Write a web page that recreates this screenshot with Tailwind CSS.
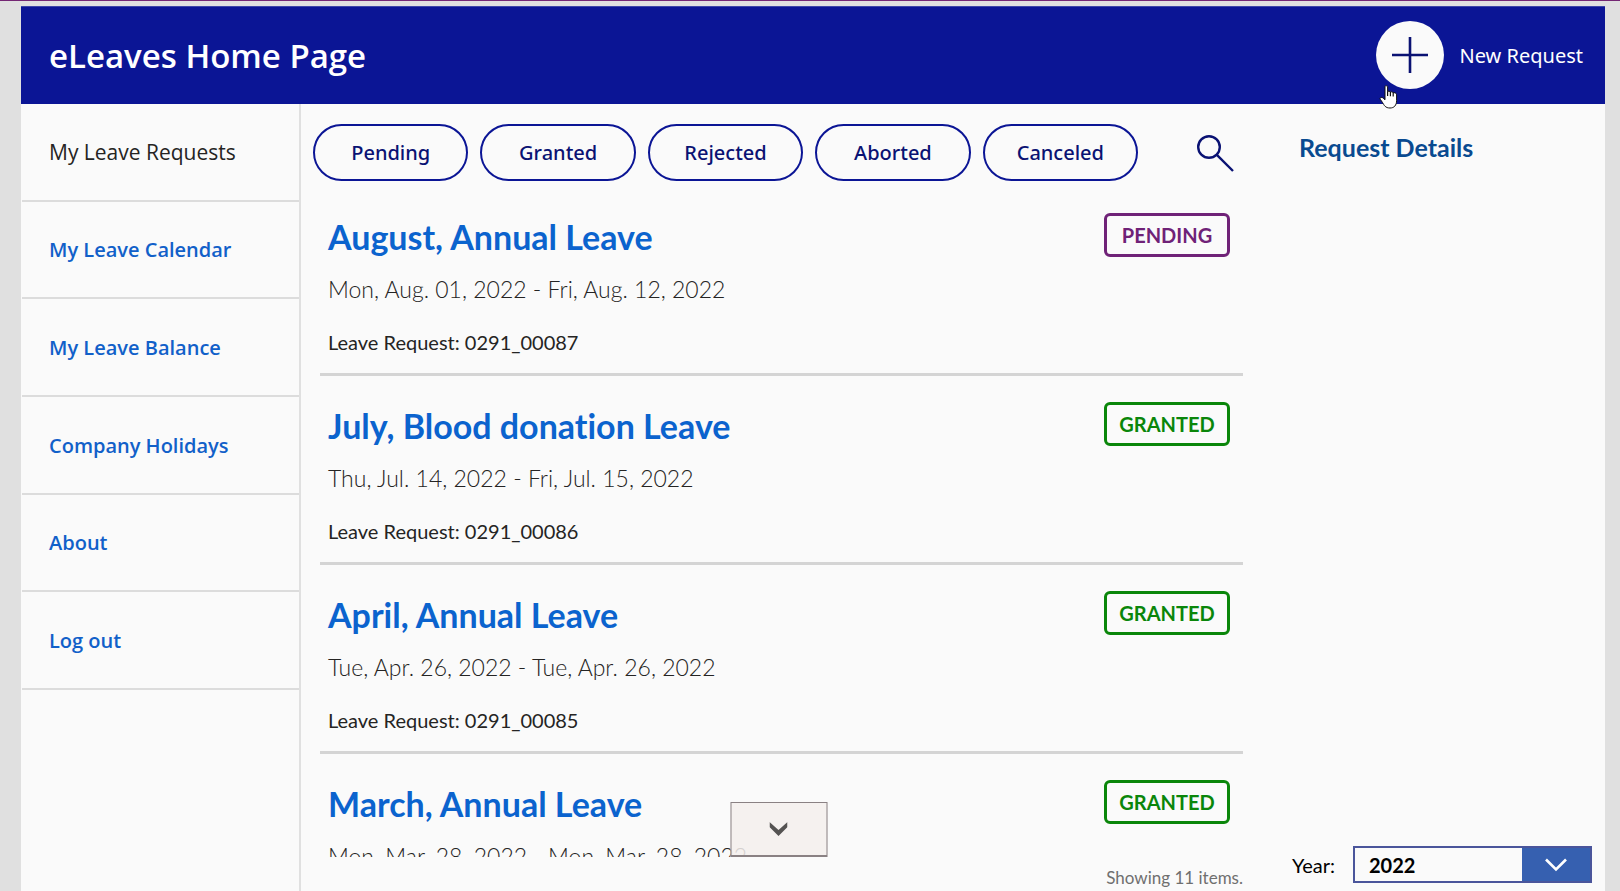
<!DOCTYPE html>
<html lang="en">
<head>
  <meta charset="UTF-8">
  <meta name="viewport" content="width=device-width, initial-scale=1.0">
  <title>eLeaves Home Page</title>
  <script src="https://cdn.jsdelivr.net/npm/@tailwindcss/browser@4"></script>
</head>
<body class="h-screen overflow-hidden bg-[#e0e0e0] border-t border-[#742774] pt-[5px] pl-[21px] pr-[15px] font-['Lato',sans-serif] text-[#252423]">

  <div class="h-full flex flex-col bg-[#fafafa]">

    <header class="relative h-[98px] shrink-0 flex items-center justify-between bg-[#0b1595] border-t border-[#3d45a8] pl-7 pr-[22px] pb-0.5 font-['Open_Sans',sans-serif]">
      <h1 class="pt-0.5 text-[33px] font-semibold text-white">eLeaves Home Page</h1>
      <button class="flex items-center gap-4 text-xl text-white cursor-pointer">
        <svg class="w-[68px] h-[68px]" viewBox="0 0 68 68" fill="none">
          <circle cx="34" cy="34" r="34" fill="#fafafa"/>
          <path d="M16 34H52M34 16V52" stroke="#0a1273" stroke-width="2.6"/>
        </svg>
        <span class="pt-0.5 font-['Noto_Sans',sans-serif]">New Request</span>
      </button>
      <!-- pointer -->
      <svg class="absolute right-[207px] top-[78px] w-[19px] h-6 z-10" viewBox="0 0 19 24">
        <path d="M6 1.5C6 .6 8.6 .6 8.6 1.7V6.8C9.3 6 11 6.2 11.3 7.1C12.3 6.5 13.6 6.9 14 7.8C15.3 7.3 17.6 8 17.6 9.8V15.5C17.6 20.5 15 23 11 23C6.5 23 5.2 20.5 3.6 17.6L1.2 14.2C.4 12.9 2.6 11.7 4.1 13L6 14.8Z" fill="#fff" stroke="#111" stroke-width="1"/>
        <path d="M8.6 6.5V11M11.4 7V11.2M14.2 7.7V11.5" stroke="#111" stroke-width="1.2"/>
      </svg>
    </header>

    <div class="flex flex-1 min-h-0">

      <nav class="w-[280px] shrink-0 border-r-2 border-[#e0e0e0] font-['Open_Sans',sans-serif] text-xl font-semibold text-[#1160c9]">
        <ul class="grid grid-rows-6 h-[586px]">
          <li class="ml-px border-b-2 border-[#dcdcdc]"><a href="#" class="h-full flex items-center pt-0.5 pl-[27px] text-[21px] font-medium text-[#252423]">My Leave Requests</a></li>
          <li class="ml-px border-b-2 border-[#dcdcdc]"><a href="#" class="h-full flex items-center pt-0.5 pl-[27px]">My Leave Calendar</a></li>
          <li class="ml-px border-b-2 border-[#dcdcdc]"><a href="#" class="h-full flex items-center pt-0.5 pl-[27px]">My Leave Balance</a></li>
          <li class="ml-px border-b-2 border-[#dcdcdc]"><a href="#" class="h-full flex items-center pt-0.5 pl-[27px]">Company Holidays</a></li>
          <li class="ml-px border-b-2 border-[#dcdcdc]"><a href="#" class="h-full flex items-center pt-0.5 pl-[27px]">About</a></li>
          <li class="ml-px border-b-2 border-[#dcdcdc]"><a href="#" class="h-full flex items-center pt-0.5 pl-[27px]">Log out</a></li>
        </ul>
      </nav>

      <main class="flex-1 min-w-0 flex flex-col">
        <!-- Filters -->
        <div class="flex items-center pt-5 pl-3 pr-[22px] font-['Noto_Sans',sans-serif] text-xl font-medium text-[#0a1273]">
          <div class="flex-1 flex gap-3 mr-[58px]">
            <button class="flex-1 h-[57px] rounded-full border-2 border-[#0b1595]">Pending</button>
            <button class="flex-1 h-[57px] rounded-full border-2 border-[#0b1595]">Granted</button>
            <button class="flex-1 h-[57px] rounded-full border-2 border-[#0b1595]">Rejected</button>
            <button class="flex-1 h-[57px] rounded-full border-2 border-[#0b1595]">Aborted</button>
            <button class="flex-1 h-[57px] rounded-full border-2 border-[#0b1595]">Canceled</button>
          </div>
          <button aria-label="Search">
            <svg class="w-[38px] h-[38px]" viewBox="0 0 38 38" fill="none" stroke="#0a1273" stroke-width="2.4">
              <circle cx="13" cy="13" r="10.8"/>
              <path d="M20.6 20.6L37 37"/>
            </svg>
          </button>
        </div>

        <!-- Requests -->
        <div class="relative flex-1 min-h-0 mt-1.5 overflow-hidden">
          <ul id="requests" class="ml-[19px] mr-[13px]"></ul>
          <button aria-label="Scroll down" class="absolute bottom-0 left-1/2 -translate-x-1/2 w-[97px] h-[55px] flex items-center justify-center bg-[#f3efec]/85 border border-[#8a8183] border-b-2">
            <svg class="w-[18px] h-[14px]" viewBox="0 0 18 14">
              <path d="M0 0L9 8L18 0V5L9 14L0 5Z" fill="#555352"/>
            </svg>
          </button>
        </div>
        <p class="h-[34px] shrink-0 pt-[9px] pr-[13px] text-right text-[17px] leading-6 text-[#6f6f6f]">Showing 11 items.</p>
      </main>

      <aside class="w-[349px] shrink-0 flex flex-col justify-between pl-9 pr-[13px] pt-[27px] pb-2">
        <h2 class="pl-[7px] text-[25px] leading-8 font-bold text-[#094a90]">Request Details</h2>
        <div class="flex items-center">
          <label for="year" class="w-[61px] text-xl text-black">Year:</label>
          <div class="relative flex-1">
            <select id="year" class="appearance-none w-full h-[37px] pl-3.5 bg-[#fafafa] border-2 border-[#4a559b] text-xl font-bold text-black">
              <option>2022</option>
              <option>2021</option>
            </select>
            <span class="absolute right-0.5 inset-y-0.5 w-[68px] flex items-center justify-center bg-[#3660b0] pointer-events-none">
              <svg class="w-[22px] h-[14px]" viewBox="0 0 22 14" fill="none" stroke="#fff" stroke-width="2.6">
                <path d="M1 1.5L11 11.5L21 1.5"/>
              </svg>
            </span>
          </div>
        </div>
      </aside>
    </div>
  </div>

  <script>
    const requests = [
      { title: 'August, Annual Leave', dates: 'Mon, Aug. 01, 2022 - Fri, Aug. 12, 2022', number: '0291_00087', status: 'PENDING' },
      { title: 'July, Blood donation Leave', dates: 'Thu, Jul. 14, 2022 - Fri, Jul. 15, 2022', number: '0291_00086', status: 'GRANTED' },
      { title: 'April, Annual Leave', dates: 'Tue, Apr. 26, 2022 - Tue, Apr. 26, 2022', number: '0291_00085', status: 'GRANTED' },
      { title: 'March, Annual Leave', dates: 'Mon, Mar. 28, 2022 - Mon, Mar. 28, 2022', number: '0291_00084', status: 'GRANTED' }
    ];

    const statusColors = {
      PENDING: 'border-[#6f2277] text-[#6f2277]',
      GRANTED: 'border-[#0a860a] text-[#0a860a]'
    };

    document.getElementById('requests').innerHTML = requests.map(r => `
      <li class="flex items-start justify-between pt-[30px] pb-[17px] pl-2 pr-[13px] border-b-3 border-[#d4d4d4]">
        <div>
          <h3 class="text-[34px] leading-10 font-bold text-[#0b63ce] [font-variant-ligatures:none]">${r.title}</h3>
          <p class="mt-4 text-[23px] leading-8 font-light">${r.dates}</p>
          <p class="mt-[23px] text-xl leading-7">Leave Request: ${r.number}</p>
        </div>
        <span class="w-[126px] h-[44px] -mt-1 flex items-center justify-center rounded-md border-3 text-xl font-bold ${statusColors[r.status]}">${r.status}</span>
      </li>
    `).join('');
  </script>

</body>
</html>
